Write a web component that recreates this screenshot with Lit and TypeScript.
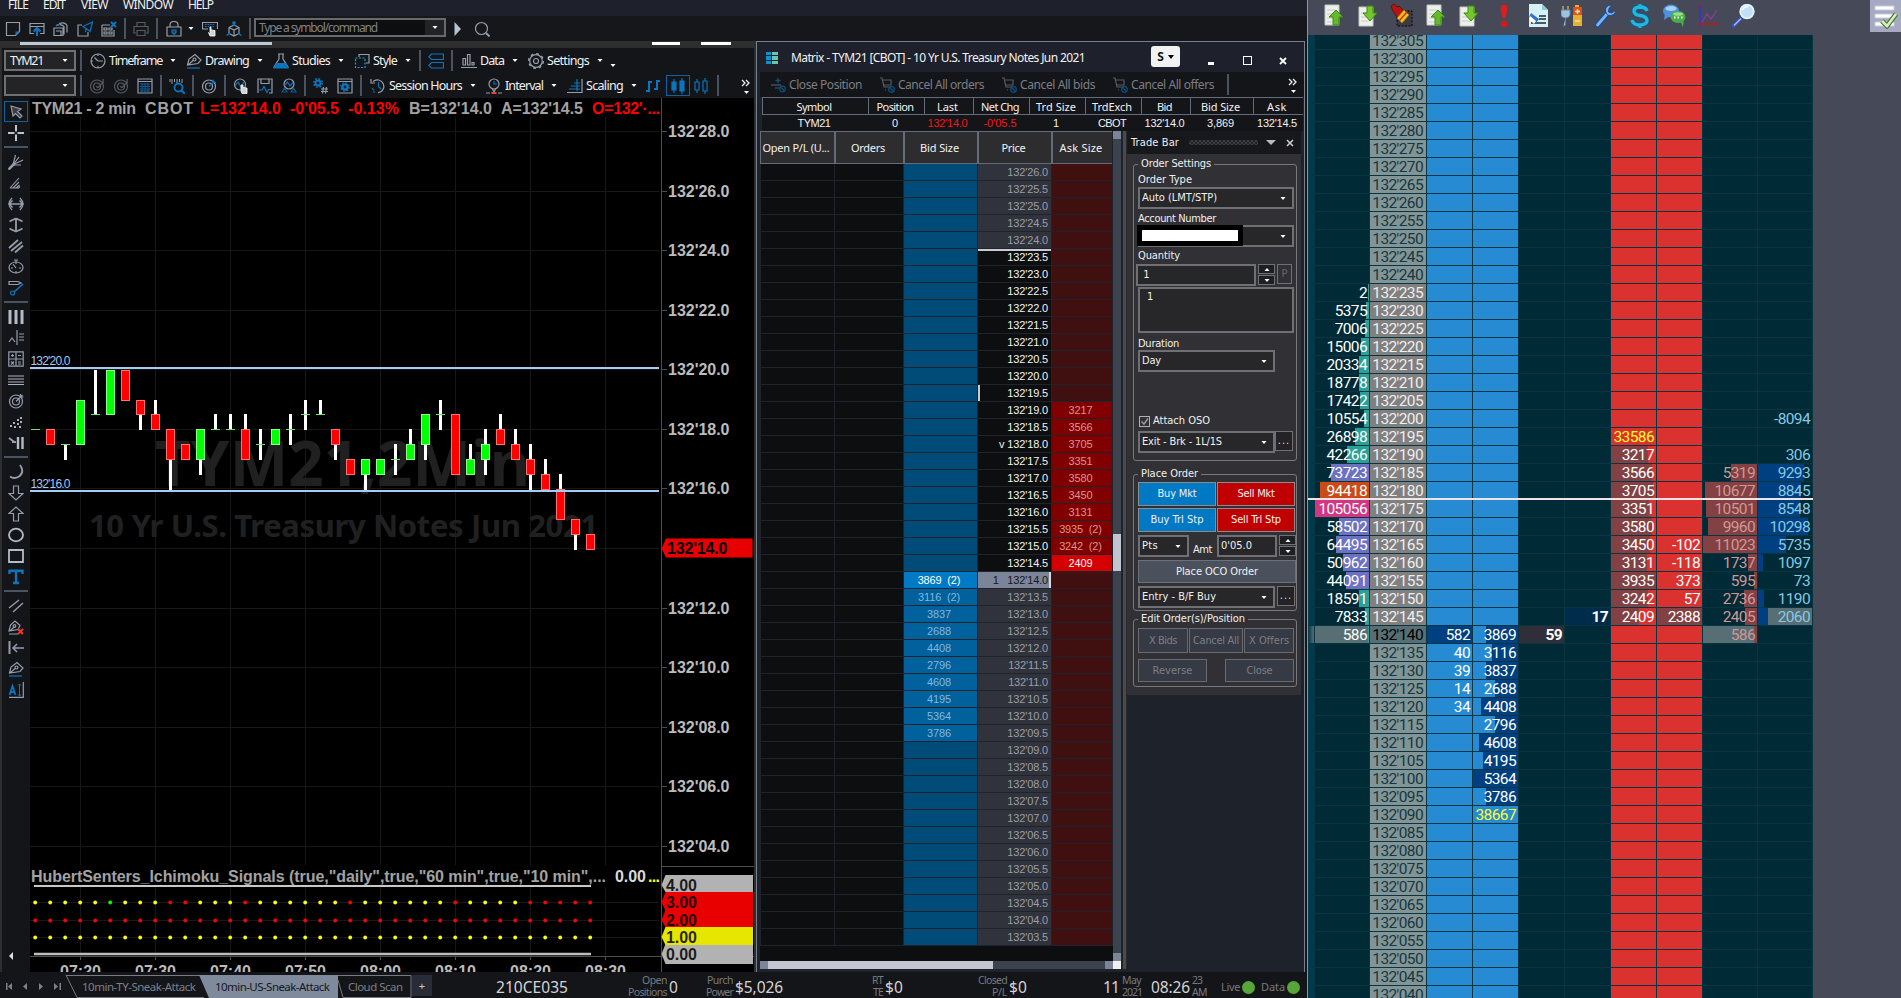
import { LitElement, html, svg, css, nothing } from "lit";
import { customElement, property } from "lit/decorators.js";
import { classMap } from "lit/directives/class-map.js";

/* Text tracked so that it fills a given width. */
@customElement("fit-text")
class FitText extends LitElement {
  @property({ type: Number }) w = 0;
  @property() t = "";
  static styles = css`
    :host { display: inline-block; white-space: pre; flex: none; }
    .s { display: inline-block; white-space: pre; }
  `;
  updated() {
    this.style.width = this.w + "px";
    const s = this.renderRoot.querySelector(".s") as HTMLElement;
    s.style.letterSpacing = "0";
    const nat = s.getBoundingClientRect().width;
    s.style.letterSpacing = (this.w - nat) / Math.max(1, this.t.length) + "px";
  }
  render() { return html`<span class="s">${this.t}</span>`; }
}

const G = "#959daa", B = "#0b76bd", D = "#555a61";
const ico: Record<string, any> = {
  note: svg`<path d="M1.500 1.500h13v9l-4 4h-9z"/><path d="M14.500 10.500h-4v4z" fill=${B} stroke="none"/>`,
  upload: svg`<path d="M5 12.500H1V2.500h14v10h-4M1 5.500h14"/><path d="M8 15V7M4.500 10.500L8 7l3.500 3.500" stroke=${B} stroke-width="2"/>`,
  print3: svg`<path d="M1 7h9v7.500H1zM3 10h5v4M3 4.500q5-2 8 1v8M6 2.500q6-2 8 2v7"/><path d="M3 5l4-2" stroke=${B}/>`,
  send: svg`<path d="M5 4H1v11h10v-4"/><path d="M15.500 1L6 5.500 9 7.500l4 3zM9 7.500L8.500 11" stroke=${B}/>`,
  gridx: svg`<path d="M1 4h8M1 4v11h12V9M3 7h3v2H3zM8 7h3v2H8zM3 11h3v2H3zM8 11h3v2H8z"/><path d="M10 1l5 5M15 1l-5 5" stroke=${B} stroke-width="2"/>`,
  print: svg`<g stroke=${D}><path d="M4 5V1.500h8V5M3 12H1V5.500h14V12h-2M4 9.500h8v5H4z"/></g>`,
  lock: svg`<path d="M1 6h14v9H1zM4 6V4q0-3.500 4-3.500T12 4v2"/><path d="M6 9h4v2.500L8 13.500 6 11.500z" stroke=${B} fill="#0b4068"/>`,
  keyhand: svg`<path d="M6 8H.5V1.500h15V8"/><path d="M3 3.500h10M3 5.500h10" stroke=${B} stroke-dasharray="1.500 1"/><path d="M8 6v7l-1.500-1.500L8 15h5V9.500l-4-.5V6z" fill="#cfd2d6" stroke="#fff" stroke-width=".8"/>`,
  cube: svg`<path d="M8 4l5 2.500v6L8 15l-5-2.500v-6zM3 6.500L8 9l5-2.500M8 9v6"/><path d="M8 .5V5M8 .5L6.500 2.500M8 .5l1.500 2M.5 14.500L4 12M15.500 14.500L12 12" stroke=${B} stroke-width="1.500"/>`,
  play: svg`<path d="M5.500 1v14l6.500-7z" fill="#b7c3d2" stroke="none"/>`,
  search: svg`<circle cx="7.500" cy="7.500" r="6"/><path d="M12 12l3.500 3.500" stroke-width="2"/>`,
  clock: svg`<circle cx="8" cy="8" r="7"/><path d="M8 8h5M8 8L4.500 4.500M8 1v2M8 13v2M1 8h2"/>`,
  pen: svg`<path d="M1.500 12L3 6l6-4.500L15 7l-3 3.500zM2 12l5-4.500"/><circle cx="8.500" cy="6.500" r="1.500"/><path d="M1 15h13" stroke=${B}/>`,
  flask: svg`<path d="M5 1h6M6 1v5M10 1v5L15 14H1L6 6"/><path d="M3.500 10.500h9L15 15H1z" fill=${B} stroke=${B}/>`,
  style: svg`<path d="M5 4V1.500h10V10h-3"/><path d="M1.500 5h9.500v9.500H1.500z" stroke="#1a9be0" stroke-dasharray="2 1.500"/>`,
  blocks: svg`<g stroke=${B}><path d="M3.500 1h12v5.500h-12L.8 3.800zM3.500 9.500h12V15h-12L.8 12.300z"/></g>`,
  data: svg`<path d="M0 14.500h16M2 12V5.500h2.500V12zM6.500 12V1.500H9V12zM11 12V9.500h2V12z"/>`,
  gear: svg`<circle cx="8" cy="8" r="6.300"/><circle cx="8" cy="8" r="2.500"/><circle cx="8" cy="8" r="7.300" stroke-dasharray="2.800 2.930" stroke-width="1.500"/>`,
  target: svg`<circle cx="8" cy="8.500" r="6.500"/><circle cx="8" cy="8.500" r="3.500"/><path d="M8 8.500L13.500 3M12 1.500v3h3" stroke=${B}/>`,
  targetG: svg`<circle cx="8" cy="8.500" r="6.500"/><circle cx="8" cy="8.500" r="3.500"/><path d="M8 8.500L14.500 2M12.500 1v3h3"/>`,
  targetD: svg`<g stroke=${D}><circle cx="8" cy="8.500" r="6.500"/><circle cx="8" cy="8.500" r="3.500"/><path d="M7 8.500l2 1 6-6M14 1v3"/></g>`,
  cal: svg`<path d="M3 6h10M3 8.500h10M3 11h10M3 13h10M5 5v9M8 5v9M11 5v9" stroke="#0b5a92" stroke-width="1"/><path d="M1 1h14v14H1zM1 3.500h14"/>`,
  lens: svg`<path d="M1 1v3M3 1v5M5.500 1v3M8 1v4M10.500 1v3M13 1v4" stroke-width="1"/><circle cx="9.500" cy="9.500" r="4" stroke=${B} stroke-width="1.800"/><path d="M12.500 12.500L16 16" stroke=${B} stroke-width="2"/>`,
  wavehand: svg`<circle cx="7" cy="6.500" r="5.500"/><path d="M2 8l3-4 3 5 3-5" stroke=${B}/><path d="M8 7v6l1 2.500h5V10l-4-.5V7z" fill="#cfd2d6" stroke="#fff" stroke-width=".8"/>`,
  save: svg`<path d="M1 15V1h14v14h-3M4 1v4.500h8V1"/><path d="M2 12h3l2-3.500 3 6 1.500-3H15" stroke=${B}/>`,
  people: svg`<circle cx="8" cy="6" r="5"/><path d="M4 7l2.500-3L9 8l3-3.500" stroke=${B}/><path d="M1 14l2.500-4L6 14zM10 14l2.500-4L15 14z" stroke="#0b5a90"/>`,
  gearhash: svg`<circle cx="5" cy="5" r="2.500" stroke=${B} stroke-width="2"/><circle cx="5" cy="5" r="4.300" stroke=${B} stroke-dasharray="1.700 1.680" stroke-width="1.500"/><path d="M8 11h7M8 13.500h7M10.500 9L9.500 15.500M13.500 9l-1 6.500"/>`,
  calgear: svg`<path d="M1 1h14v14H1zM1 3.500h14"/><circle cx="8" cy="9" r="2.600" stroke=${B} stroke-width="2.400"/><circle cx="8" cy="9" r="4.200" stroke=${B} stroke-dasharray="1.600 1.700"/>`,
  history: svg`<path d="M3 3.500A6.500 6.500 0 1 1 8 14.800M1 1v4h4"/><path d="M8.500 4v4.500L11 11M2 10l2 2.500M3 14h2" stroke=${B}/>`,
  interval: svg`<circle cx="8" cy="6" r="5"/><path d="M6 10l2 4 2-4"/><path d="M8 3v3h3" stroke=${B}/><path d="M0 15h4M12 15h4"/><path d="M5.500 15h5" stroke="#e8432e" stroke-width="2"/>`,
  scaling: svg`<path d="M15 1v14M0 14.500h15"/><path d="M2 11h11M4 8h9M7 5h6M10 1v12" stroke=${B}/>`,
  ohlc: svg`<g stroke=${B} stroke-width="2"><path d="M4 3v11M1 13h3M4 4h3M12 2v10M9 11h3M12 3h3"/></g>`,
  candle: svg`<path d="M2 4h4v8H2zM10 3h4v10h-4z" fill=${B} stroke=${B}/><path d="M4 1v14M12 0v16" stroke=${B}/>`,
  candleO: svg`<g stroke=${B}><path d="M2 4h4v8H2zM10 3h4v10h-4zM4 1v3M4 12v3M12 0v3M12 13v3"/></g>`,
  arrow: svg`<path d="M3 2l2 10 2.500-2.500L12 14l2-2-4.500-4.500L13 5z" fill="#3a3e45"/>`,
  cross: svg`<path d="M8 0v6.500M8 9.500V16M0 8h6.500M9.500 8H16" stroke="#bcc4cf" stroke-width="2"/>`,
  fork: svg`<path d="M.5 15.500L6 10" stroke-width="2.600"/><path d="M5 11L7.500 1M5 11L11 3M5.500 10.500L15 6M5 11h8" stroke-width="1.200"/>`,
  fan: svg`<path d="M2 13L11 3M5 13l6-6M8 13l3.500-3M10.500 13l1.500-1.500M2 13h9" stroke-width="1.100"/>`,
  harr: svg`<path d="M1 8h14M4.500 4.500L1 8l3.500 3.500M11.500 4.500L15 8l-3.500 3.500" stroke-width="1.500"/><path d="M4 2Q1 5 1 8t3 6M12 2q3 3 3 6t-3 6" stroke-width="1.200"/>`,
  varr: svg`<path d="M8 2v12M1.500 4.500Q4 3 8 1.500q4 1.500 6.500 3M1.500 11.500Q4 13 8 14.500q4-1.500 6.500-3" stroke-width="1.800"/>`,
  lines3: svg`<path d="M1 10L10 2M3 13L14 4M7 14.500l8-7" stroke-width="1.800"/>`,
  cycle: svg`<ellipse cx="8" cy="8.500" rx="7" ry="5.500"/><path d="M6 1h4M8 1v4M5 5l3 4M3 9h2M11 9h2M8 12v2"/>`,
  pencil: svg`<path d="M1 1.500h9l3 1.500-3 1.500H1z"/><path d="M15 4L6 12" stroke=${B} stroke-width="1.600"/><circle cx="4.500" cy="13" r="2" stroke=${B}/>`,
  bars3: svg`<path d="M2 1v14M8 1v14M14 1v14" stroke="#b4bcc8" stroke-width="3"/>`,
  profile: svg`<path d="M9 0v15M11 4h5M11 7h5M11 10h5M1 12l3-4 3 4"/>`,
  calc: svg`<path d="M.8 .8h14.400v14.400H.8zM8 1v14M1 8h14M4.500 3v3M3 4.500h3M10 4.500h3M3 10.500l3 3M6 10.500l-3 3M10 11h3M10 13h3"/>`,
  hlines: svg`<path d="M0 4h16M0 7h16M0 10h16M0 12.500h16" stroke="#a9b1bd"/>`,
  dots: svg`<g fill="#a9b1bd" stroke="none"><rect x="2" y="11" width="2" height="2"/><rect x="5" y="8" width="2" height="2"/><rect x="6" y="12" width="2" height="2"/><rect x="9" y="5" width="2" height="2"/><rect x="9" y="9" width="2" height="2"/><rect x="12" y="3" width="2" height="2"/><rect x="12" y="7" width="2" height="2"/><rect x="11" y="12" width="2" height="2"/></g>`,
  stop: svg`<path d="M1 3l6 4.500M4 7h4" stroke-width="2"/><path d="M10 2v12M14.500 2v12" stroke="#b4bcc8" stroke-width="2.400"/>`,
  arc: svg`<path d="M12 1q5 7-1 11.500-5 3-9 0" stroke-width="1.800"/>`,
  down: svg`<path d="M5.500 1h5v7.500H15L8 15 1 8.500h4.500z"/>`,
  up: svg`<path d="M5.500 15h5V7.500H15L8 1 1 7.500h4.500z"/>`,
  oval: svg`<ellipse cx="8" cy="8" rx="7" ry="6.300" stroke="#b4bcc8" stroke-width="1.800"/>`,
  rect: svg`<path d="M1 2h14v12H1z" stroke="#b4bcc8" stroke-width="1.800"/>`,
  tee: svg`<path d="M1.500 5V1.800h13V5M8 2v12M5 14h6" stroke=${B} stroke-width="2.400"/>`,
  par: svg`<path d="M1 10L11 2M5 14L15 5" stroke-width="1.400"/>`,
  penx: svg`<path d="M1 12l1.500-6L7 2l5 4.500-2 4zM2 12l4-4M1 15h9"/><circle cx="6.500" cy="7" r="1.300"/><path d="M10 10l5 5M15 10l-5 5" stroke="#f0392b" stroke-width="2"/>`,
  back: svg`<path d="M1.500 1v13" stroke-width="2"/><path d="M5 8h11M9 4L5 8l4 4" stroke-width="1.500"/>`,
  atext: svg`<path d="M1.500 13L4.500 4l3 9M2.500 10h4" stroke=${B} stroke-width="1.800"/><path d="M11.500 2v12M10 3.500L11.500 2 13 3.500M10 12.500l1.500 1.500 1.500-1.500" stroke=${B} stroke-width="1"/><path d="M15.300 0v15.300H1"/>`,
  closepos: svg`<path d="M8 1v5M5.500 3.500h5M5 11h4" stroke="#0b4e7c" stroke-width="1.500"/><path d="M1 8h10" stroke=${D}/><circle cx="12.500" cy="12" r="2.800" stroke="#0b4e7c"/><path d="M10.500 10l4 4" stroke="#0b4e7c"/>`,
  cart: svg`<path d="M1 1h2l2 9h7M4 3h8v5H5M6 13h1" stroke=${D}/><circle cx="12.500" cy="12.500" r="2.800" stroke="#0b4e7c"/><path d="M10.500 10.500l4 4" stroke="#0b4e7c"/>`,
};
const icon = (n: string) => html`<svg width="16" height="16" viewBox="0 0 16 16" fill="none" stroke=${G} stroke-width="1.200">${ico[n]}</svg>`;
const caret = html`<svg width="8" height="5" viewBox="0 0 8 5"><path d="M1.500 1h5L4 4z" fill="#fff"/></svg>`;
const chevron = html`<svg width="10" height="18" viewBox="0 0 10 18"><path d="M1 3l3 3-3 3M5 3l3 3-3 3" fill="none" stroke="#eee" stroke-width="1.300"/><path d="M3 14h5l-2.500 3z" fill="#fff"/></svg>`;
const fit = (t: string, w: number) => html`<fit-text .t=${t} .w=${w}></fit-text>`;

type Item = [number, number, any]; // start, width, content
/* Turns start positions into a row of spacers and boxes. */
const run = (from: number, items: Item[]) => {
  let x = from;
  return items.map(([s, w, c]) => {
    const gap = s - x;
    x = s + w;
    return html`<div class="slot" style="width:${w}px;margin-left:${gap}px">${c}</div>`;
  });
};
const sep = html`<i class="sep"></i>`;
const slotCss = css`
  .slot { display: flex; align-items: center; justify-content: center; flex: none; height: 100%; }
  .sep { width: 2px; height: 21px; background: #4b5360; }
  svg { display: block; flex: none; }
`;

/* ---------- price chart ---------- */
// [color, open/close high, open/close low, wick high, wick low] in half ticks above 132'14.0
const candles: [string, number, number, number, number][] = [
  ["d", 8, 8, 8, 8], ["r", 8, 7, 8, 7], ["d", 7, 7, 7, 6], ["g", 10, 7, 10, 7], ["d", 9, 9, 12, 9], ["g", 12, 9, 12, 9],
  ["r", 12, 10, 12, 10], ["r", 10, 9, 10, 8], ["r", 9, 8, 10, 8], ["r", 8, 6, 8, 4], ["r", 7, 6, 7, 6], ["g", 8, 6, 8, 5],
  ["d", 8, 8, 9, 8], ["d", 8, 8, 9, 8], ["r", 8, 6, 9, 6], ["d", 7, 7, 8, 6], ["g", 8, 7, 8, 7], ["d", 8, 8, 9, 7],
  ["d", 9, 9, 10, 8], ["d", 9, 9, 10, 9], ["r", 8, 7, 8, 6], ["r", 6, 5, 6, 5], ["g", 6, 5, 6, 4], ["g", 6, 5, 6, 5],
  ["d", 6, 6, 7, 5], ["g", 7, 6, 8, 6], ["g", 9, 7, 9, 6], ["d", 9, 9, 10, 8], ["r", 9, 5, 9, 5], ["g", 6, 5, 7, 5],
  ["g", 7, 6, 8, 5], ["r", 8, 7, 9, 7], ["r", 7, 6, 8, 6], ["r", 6, 5, 7, 4], ["r", 5, 4, 6, 4], ["r", 4, 2, 5, 2],
  ["r", 2, 1, 2, 0], ["r", 1, 0, 1, 0],
];
const lvl = (n: number) => Math.round(548.5 - n * 14.9) + 0.5;

@customElement("price-chart")
class PriceChart extends LitElement {
  static styles = css`
    :host { display: block; width: 724px; height: 874px; background: #000; }
    svg { display: block; }
    .b { font: bold 16px "Liberation Sans", Arial, sans-serif; }
    .l { font: 12px "Liberation Sans", Arial, sans-serif; fill: #a6c8f4; }
    .w { font-family: "Noto Sans", "Open Sans", sans-serif; font-weight: 700; fill: #202020; }
  `;
  render() {
    const xs = [0, 1, 2, 3, 4, 5, 6, 7].map((i) => 80.5 + i * 75);
    const prices = ["28", "26", "24", "22", "20", "18", "16", "", "12", "10", "08", "06", "04"];
    const py = (i: number) => Math.round(131 + i * 59.58) + 0.5;
    const t = (x: number, w: number, s: string, f: string, y = 114) =>
      svg`<text class="b" x=${x} y=${y} textLength=${w} fill=${f} xml:space="preserve">${s}</text>`;
    const red = new Set([9, 10, 14, 21, 28, 33, 34, 35, 36, 37]);
    const tag = (y: number, h: number, c: string, s: string) => svg`
      <path d="M661.500 ${y + 10}L665.500 ${y}H753V${y + h}H665.500z" fill=${c}/>
      <text class="b" x="666" y=${y + 16} fill="#000" fill-opacity=".85" textLength="31">${s}</text>`;
    return html`<svg width="724" height="874" viewBox="30 98 724 874">
      <g stroke="#171717">
        ${xs.map((x) => svg`<path d="M${x} 117V865M${x} 887V956"/>`)}
        ${prices.map((_, i) => svg`<path d="M30 ${py(i)}H659"/>`)}
        ${[902.5, 920.5, 937.5].map((y) => svg`<path d="M30 ${y}H659"/>`)}
      </g>
      <text class="w" x="155" y="486" font-size="62" textLength="375">TYM21,2Min</text>
      <text class="w" x="89" y="537" font-size="31" textLength="509">10 Yr U.S. Treasury Notes Jun 2021</text>
      <g stroke="#4d4d4d">
        <path d="M661.500 98V972M661 866.500H754M30 956.500H754"/>
        ${prices.map((_, i) => svg`<path d="M661 ${py(i)}h6"/>`)}
        ${xs.map((x) => svg`<path d="M${x} 956v4"/>`)}
      </g>
      ${prices.map((p, i) => p ? t(668, 61.5, `132'${p}.0`, "#bcbcbc", py(i) + 5.5) : nothing)}
      ${candles.map(([c, a, b, h, l], i) => {
        const x = 35.5 + i * 15;
        const wick = h > a || l < b ? svg`<path d="M${x} ${lvl(h) - 0.5}V${lvl(l) + 0.5}" stroke="#fff" stroke-width="3"/>` : nothing;
        return c === "d"
          ? svg`${wick}<path d="M${x - 4.5} ${lvl(a)}h9" stroke="#6be86b"/>`
          : svg`${wick}<rect x=${x - 4} y=${lvl(a)} width="8" height=${lvl(b) - lvl(a)} fill=${c === "r" ? "#f00" : "#0f0"} stroke=${c === "r" ? "#ff7070" : "#8cff8c"}/>`;
      })}
      <path d="M30 368H659M30 491H659" stroke="#a6ccf6" stroke-width="2"/>
      <text class="l" x="30.500" y="365" textLength="40">132'20.0</text>
      <text class="l" x="30.500" y="488" textLength="40">132'16.0</text>
      <path d="M661.500 548.500L666 538.500H752.500V557.500H666z" fill="#e80000"/>
      ${t(667, 60.5, "132'14.0", "#000", 554)}
      ${t(32, 104, "TYM21 - 2 min", "#a2a2a2")}${t(145, 48, "CBOT", "#a2a2a2")}
      ${t(200, 81, "L=132'14.0", "#f00")}${t(290, 49, "-0'05.5", "#f00")}${t(348, 51, "-0.13%", "#f00")}
      ${t(409, 83, "B=132'14.0", "#a2a2a2")}${t(501, 82, "A=132'14.5", "#a2a2a2")}${t(592, 68, "O=132'·...", "#f00")}
      ${t(31, 575, `HubertSenters_Ichimoku_Signals (true,"daily",true,"60 min",true,"10 min",...`, "#a2a2a2", 881.5)}
      ${t(615, 31, "0.00", "#d8d8d8", 881.5)}${t(648, 12, "...", "#ffff00", 881.5)}
      <path d="M34 886H591" stroke="#c8c8c8" stroke-width="2"/>
      <path d="M34 954H591" stroke="#bdbdbd" stroke-width="2.500"/>
      ${candles.map((_, i) => {
        const x = 35.2 + i * 15;
        return svg`<circle cx=${x} cy="902.500" r="1.900" fill=${i === 5 ? "#0f0" : red.has(i) ? "#f00" : "#ff0"}/>
          <circle cx=${x} cy="920.500" r="1.900" fill="#f00"/><circle cx=${x} cy="937.500" r="1.900" fill="#ff0"/>`;
      })}
      ${xs.map((x, i) => t(x - 20.5, 41, ["07:20", "07:30", "07:40", "07:50", "08:00", "08:10", "08:20", "08:30"][i], "#bcbcbc", 977))}
      ${tag(944, 20, "#b2b2b2", "0.00")}${tag(927, 18, "#e6e600", "1.00")}${tag(910, 17, "#e80000", "2.00")}
      ${tag(892, 19, "#e80000", "3.00")}${tag(875, 17, "#b2b2b2", "4.00")}
    </svg>`;
  }
}

@customElement("chart-window")
class ChartWindow extends LitElement {
  static styles = [slotCss, css`
    :host { display: flex; flex-direction: column; width: 754px; height: 931px; background: #2e2e2e; font: 12.500px "Noto Sans", "Open Sans", sans-serif; color: #f0f0f0; }
    .strip { display: flex; height: 7px; align-items: flex-start; }
    .bar { height: 3px; width: 100%; margin-top: 1px; }
    .lt { background: #bccad8; } .wh { background: #fff; }
    .body { display: flex; flex-direction: column; margin-left: 2px; background: #141519; }
    .tb { display: flex; height: 25px; }
    .strip .slot { align-items: flex-start; }
    .combo { box-sizing: border-box; width: 72px; height: 21px; border: 2px solid #6f7074; background: #242426; display: flex; align-items: center; justify-content: space-between; padding: 0 5px 0 4px; }
    .sel { box-sizing: border-box; width: 24px; height: 21px; border: 1px solid #0f62a0; display: flex; align-items: center; justify-content: center; }
    .main { display: flex; }
    .tools { width: 28px; display: flex; flex-direction: column; align-items: center; padding-top: 3px; box-sizing: border-box; }
    .tool { height: 21px; display: flex; align-items: center; justify-content: center; width: 24px; flex: none; }
    .on { outline: 1px solid #0f62a0; outline-offset: -1px; }
    .hr { width: 24px; height: 2px; background: #4b5360; margin: 3px 0; flex: none; }
    .low { margin-top: 9px; } .more { margin: 252px 11px 0 0; }
  `];
  render() {
    const c = caret;
    const r1: Item[] = [
      [4, 72, html`<div class="combo">${fit("TYM21", 33)}${c}</div>`], [79, 4, sep],
      [90, 16, icon("clock")], [109, 53, fit("Timeframe", 53)], [169, 8, c],
      [186, 16, icon("pen")], [205, 44, fit("Drawing", 44)], [256, 8, c],
      [273, 16, icon("flask")], [292, 38, fit("Studies", 38)], [337, 8, c],
      [354, 16, icon("style")], [373, 24, fit("Style", 24)], [404, 8, c], [418, 4, sep],
      [428, 16, icon("blocks")], [450, 4, sep],
      [461, 16, icon("data")], [480, 24, fit("Data", 24)], [511, 8, c],
      [528, 16, icon("gear")], [547, 42, fit("Settings", 42)], [596, 8, c], [609, 8, html`<div class="low">${c}</div>`],
    ];
    const r2: Item[] = [
      [4, 72, html`<div class="combo"><span></span>${c}</div>`], [79, 4, sep],
      [89, 16, icon("targetD")], [113, 16, icon("targetD")], [137, 16, icon("cal")], [159, 4, sep],
      [169, 16, icon("lens")], [191, 4, sep], [201, 16, icon("target")], [223, 4, sep],
      [233, 16, icon("wavehand")], [257, 16, icon("save")], [281, 16, icon("people")], [303, 4, sep],
      [313, 16, icon("gearhash")], [337, 16, icon("calgear")], [359, 4, sep],
      [370, 16, icon("history")], [389, 73, fit("Session Hours", 73)], [469, 8, c],
      [486, 16, icon("interval")], [505, 38, fit("Interval", 38)], [550, 8, c],
      [567, 16, icon("scaling")], [586, 37, fit("Scaling", 37)], [630, 8, c],
      [645, 16, icon("ohlc")], [666, 24, html`<div class="sel">${icon("candle")}</div>`], [693, 16, icon("candleO")],
      [716, 4, sep], [741, 10, chevron],
    ];
    const groups = [["arrow", "cross"], ["fork", "fan", "harr", "varr", "lines3", "cycle", "pencil"],
      ["bars3", "profile", "calc", "hlines", "targetG", "dots", "stop"], ["arc", "down", "up", "oval", "rect", "tee"],
      ["par", "penx", "back", "pen", "atext"]];
    return html`
      <div class="strip">${run(0, [[20, 252, html`<i class="bar lt"></i>`], [652, 28, html`<i class="bar wh"></i>`], [701, 30, html`<i class="bar wh"></i>`]])}</div>
      <div class="body">
        <div class="tb">${run(2, r1)}</div>
        <div class="tb">${run(2, r2)}</div>
        <div class="main">
          <div class="tools">
            ${groups.map((g, i) => html`${i ? html`<i class="hr"></i>` : nothing}${g.map((n) => html`<div class=${classMap({ tool: true, on: n === "arrow" })}>${icon(n)}</div>`)}`)}
            <div class="more"><svg width="6" height="8"><path d="M5 0v8L1 4z" fill="#ddd"/></svg></div>
          </div>
          <price-chart></price-chart>
        </div>
      </div>`;
  }
}

/* ---------- matrix order window ---------- */
const bids: Record<number, string> = { 24: "3869  (2)", 25: "3116  (2)", 26: "3837", 27: "2688", 28: "4408", 29: "2796", 30: "4608", 31: "4195", 32: "5364", 33: "3786" };
const asks: Record<number, string> = { 14: "3217", 15: "3566", 16: "3705", 17: "3351", 18: "3580", 19: "3450", 20: "3131", 21: "3935  (2)", 22: "3242  (2)", 23: "2409" };

@customElement("trade-bar")
class TradeBar extends LitElement {
  static styles = [slotCss, css`
    :host { display: block; width: 174px; font: 11px/14px "DejaVu Sans Condensed", "DejaVu Sans", sans-serif; color: #f0f0f0; }
    .head { display: flex; height: 23px; background: #17181c; }
    .grip { width: 69px; height: 5px; background: repeating-conic-gradient(#3c3d42 0 25%, #222327 0 50%) 0 0 / 4px 4px; }
    .panel { background: #313035; height: 541px; padding: 3px 4px 0 6px; box-sizing: border-box; }
    fieldset { margin: 0; border: 1px solid #77787c; border-radius: 3px; padding: 0 0 0 4px; box-sizing: border-box; width: 164px; min-width: 0; }
    legend { padding: 0 3px; margin-left: 0; height: 14px; }
    .g1 { height: 304px; } .g2 { height: 144px; margin-top: 6px; } .g3 { height: 75px; margin-top: 1px; }
    .row { display: flex; }
    .lab { height: 14px; }
    .f { box-sizing: border-box; border: 2px solid #6f7074; background: #27272a; height: 22px; display: flex; align-items: center; justify-content: space-between; padding: 0 5px 0 2px; flex: none; }
    .w157 { width: 156px; } .w137 { width: 137px; } .w121 { width: 120px; margin-left: -2px; } .w51 { width: 51px; } .w60 { width: 60px; margin-left: 5px; }
    .acct { position: relative; }
    .mask { position: absolute; left: -5px; top: -11px; width: 96px; height: 11px; border: 5px solid #000; background: #fff; }
    .area { height: 46px; align-items: flex-start; padding: 1px 0 0 7px; }
    .sp { width: 17px; height: 21px; display: flex; flex-direction: column; gap: 1px; margin-left: 2px; flex: none; }
    .sp i { flex: 1; border: 1px solid #6f7074; background: #1e1f22; display: flex; align-items: center; justify-content: center; }
    .flip { transform: rotate(180deg); }
    .p, .dots { box-sizing: border-box; border: 1px solid #6f7074; width: 15px; height: 20px; margin-left: 2px; display: flex; align-items: center; justify-content: center; color: #66676b; flex: none; }
    .dots { width: 18px; margin-left: 0; background: #232326; color: #ddd; height: 20px; letter-spacing: 1px; }
    .btn { box-sizing: border-box; height: 24px; border: 1px solid #8b8c90; display: flex; align-items: center; justify-content: center; flex: none; }
    .buy { background: #0079c4; width: 78px; } .sell { background: #c00000; width: 78px; margin-left: 1px; }
    .oco { background: #4a505c; width: 158px; height: 23px; border-color: #6b707a; }
    .dis { background: #353a44; color: #7b7f86; border-color: #6a6b70; height: 25px; }
    .cb { width: 9px; height: 9px; border: 1px solid #b0b0b0; margin-right: 3px; }
    .n1 { margin-top: -1px; } .m1 { margin-top: 1px; } .m2 { margin-top: 2px; } .m3 { margin-top: 3px; } .m4 { margin-top: 4px; }
    .chk { margin: 42px 0 0 1px; align-items: center; }
    .amt { margin: 8px 0 0 4px; }
    .d2 { margin-left: 2px; }
    .e1 { display: grid; grid-template-columns: 50px 54px 50px; gap: 1px; margin-top: 2px; }
    .e2 { justify-content: space-between; width: 156px; margin-top: 6px; }
    .e2 .btn { width: 69px; height: 23px; }
  `];
  render() {
    const spin = html`<span class="sp"><i><span class="flip">${caret}</span></i><i>${caret}</i></span>`;
    return html`
      <div class="head">${run(0, [[4, 48, fit("Trade Bar", 48)], [62, 69, html`<i class="grip"></i>`],
        [139, 10, html`<svg width="10" height="6"><path d="M0 0h10L5 5z" fill="#bbb"/></svg>`],
        [159, 8, html`<svg width="8" height="8"><path d="M1 1l6 6M7 1L1 7" stroke="#ccc" stroke-width="1.600"/></svg>`]])}</div>
      <div class="panel">
        <fieldset class="g1"><legend>${fit("Order Settings", 70)}</legend>
          <div class="lab m2">${fit("Order Type", 54)}</div>
          <div class="f w157">${fit("Auto (LMT/STP)", 75)}${caret}</div>
          <div class="lab m3">${fit("Account Number", 78)}</div>
          <div class="f w157 n1"><span class="acct"><i class="mask"></i></span>${caret}</div>
          <div class="lab m2">${fit("Quantity", 42)}</div>
          <div class="row m1"><div class="f w121">&nbsp;1</div>${spin}<div class="p">P</div></div>
          <div class="f area w157 m1">1</div>
          <div class="lab m4">${fit("Duration", 41)}</div>
          <div class="f w137 n1">${fit("Day", 19)}${caret}</div>
          <div class="row chk"><i class="cb"><svg width="9" height="9"><path d="M1.500 4.500L4 7l4-5.500" stroke="#999" fill="none" stroke-width="1.500"/></svg></i>${fit("Attach OSO", 57)}</div>
          <div class="row m3"><div class="f w137">${fit("Exit - Brk - 1L/1S", 80)}${caret}</div><div class="dots">...</div></div>
        </fieldset>
        <fieldset class="g2"><legend>${fit("Place Order", 57)}</legend>
          <div class="row m1"><div class="btn buy">${fit("Buy Mkt", 39)}</div><div class="btn sell">${fit("Sell Mkt", 37)}</div></div>
          <div class="row m2"><div class="btn buy">${fit("Buy Trl Stp", 53)}</div><div class="btn sell">${fit("Sell Trl Stp", 50)}</div></div>
          <div class="row m3"><div class="f w51">${fit("Pts", 16)}${caret}</div><span class="amt">${fit("Amt", 19)}</span><div class="f w60">${fit("0'05.0", 31)}</div>${spin}</div>
          <div class="btn oco m3">${fit("Place OCO Order", 82)}</div>
          <div class="row m3"><div class="f w137">${fit("Entry - B/F Buy", 74)}${caret}</div><div class="dots d2">...</div></div>
        </fieldset>
        <fieldset class="g3"><legend>${fit("Edit Order(s)/Position", 104)}</legend>
          <div class="e1"><div class="btn dis">${fit("X Bids", 28)}</div><div class="btn dis">${fit("Cancel All", 46)}</div><div class="btn dis">${fit("X Offers", 40)}</div></div>
          <div class="row e2"><div class="btn dis">${fit("Reverse", 40)}</div><div class="btn dis">${fit("Close", 26)}</div></div>
        </fieldset>
      </div>`;
  }
}

@customElement("matrix-window")
class MatrixWindow extends LitElement {
  static styles = [slotCss, css`
    :host { display: flex; flex-direction: column; box-sizing: border-box; width: 549px; height: 931px; margin-left: 2px; border: solid #76808f; border-width: 1px 1px 0; background: #1e222b; color: #f2f2f2; font: 12px "Noto Sans", "Open Sans", sans-serif; }
    .title { display: flex; height: 30px; background: #1e212b; padding-top: 1px; box-sizing: border-box; }
    .tb { display: flex; height: 25px; background: #141519; margin-left: 3px; color: #7b7e84; }
    .s { width: 29px; height: 21px; border-radius: 3px; background: #f2f2f2; color: #111; display: flex; align-items: center; justify-content: center; gap: 4px; font-weight: 700; margin-bottom: 2px; }
    .min { width: 6px; height: 3px; background: #fff; margin-top: 12px; }
    .max { width: 7px; height: 7px; border: 1.500px solid #fff; margin-top: 5px; }
    .x { margin-top: 6px; }
    .tbl { display: grid; grid-template-columns: 106px 56px 49px 56px 56px 56px 49px 63px 50px; margin: 0 0 0 5px; width: 541px; background: #141519; font-family: "Noto Sans"; font-size: 11px; }
    .th { box-sizing: border-box; height: 18px; border: 1px solid #646b7a; border-right-width: 0; display: flex; align-items: center; justify-content: center; padding-right: 3px; }
    .td { height: 16px; display: flex; align-items: center; justify-content: center; font: 11px "Liberation Sans", sans-serif; padding-right: 2px; }
    .td.neg { color: #f21818; }
    .work { display: flex; margin-left: 3px; }
    .lad { width: 353px; }
    .r, .h { display: grid; grid-template-columns: 74px 69px 74px 74px 61px; padding-left: 1px; }
    .h { margin-left: -1px; }
    .h span { box-sizing: border-box; height: 33px; border: 1px solid #646b7a; border-width: 1px 0 1px 2px; background: #2d2d30; display: flex; align-items: center; justify-content: center; font-size: 11px; padding-right: 3px; }
    .h span:first-child { border-left-width: 1px; }
    .r { height: 17px; font: 11px/17px "Liberation Sans", sans-serif; letter-spacing: -0.150px; background: #20232c; }
    .c { margin: 0 1px 1px 0; height: 16px; background: #0d0e10; text-align: center; white-space: pre; box-sizing: border-box; padding-right: 3px; }
    .bid { background: #004b78; } .bidq { background: #00619c; color: #80b8dd; } .best { background: #007ac4; color: #fff; }
    .ask { background: #401010; } .askq { background: #800000; color: #da9494; } .low { background: #d60000; color: #fff; }
    .px { text-align: right; padding-right: 3px; }
    .off { background: #30333c; color: #9a9ea6; }
    .cur { background: #7b8597; color: #15171c; border-right: 2px solid #d3d7de; padding-right: 1px; }
    .topm { border-top: 2px solid #c8ccd2; line-height: 13px; }
    .lm { border-left: 2px solid #c8ccd2; }
    .foot { height: 15px; background: #0d0e10; }
    .hs { display: flex; height: 8px; background: #3c434e; }
    .q { width: 8px; height: 8px; background: #7b8597; }
    .ht { width: 225px; height: 8px; background: #c1c6d0; margin-right: 112px; }
    .vs { width: 8px; height: 838px; background: #3c434e; display: flex; flex-direction: column; }
    .vt { height: 37px; background: #c1c6d0; margin-top: 395px; }
    .vs .end { margin-top: 382px; } .cor { width: 8px; height: 8px; background: #f0f0f0; flex: none; }
    .split { width: 3px; background: #4a4a4c; margin: 0 0 0 2px; border-right: 1px solid #2a2a2c; height: 838px; }
  `];
  render() {
    const cols: [string, number, string, number][] = [["Symbol", 35, "TYM21", 33], ["Position", 37, "0", 6], ["Last", 21, "132'14.0", 40], ["Net Chg", 38, "-0'05.5", 33],
      ["Trd Size", 40, "1", 6], ["TrdExch", 40, "CBOT", 28], ["Bid", 15, "132'14.0", 40], ["Bid Size", 39, "3,869", 27], ["Ask", 20, "132'14.5", 40]];
    const gly = html`<svg width="12" height="12"><path d="M0 0h5v3H0zM0 4h5v4H0zM0 9h5v3H0z" fill="#0b93cf"/><path d="M6 0h6v3H6zM6 4h6v4H6zM6 9h6v3H6z" fill="#66c5b0"/></svg>`;
    const x = html`<svg class="x" width="8" height="8"><path d="M1 1l6 6M7 1L1 7" stroke="#fff" stroke-width="1.800"/></svg>`;
    return html`
      <div class="title">${run(757, [[766, 12, gly], [791, 294, fit("Matrix - TYM21 [CBOT] - 10 Yr U.S. Treasury Notes Jun 2021", 294)],
        [1151, 29, html`<div class="s"><span>S</span><svg width="6" height="4"><path d="M0 0h6L3 4z"/></svg></div>`],
        [1208, 6, html`<i class="min"></i>`], [1242, 10, html`<i class="max"></i>`], [1279, 8, x]])}</div>
      <div class="tb">${run(760, [[770, 16, icon("closepos")], [789, 73, fit("Close Position", 73)], [879, 16, icon("cart")], [898, 86, fit("Cancel All orders", 86)],
        [1001, 16, icon("cart")], [1020, 75, fit("Cancel All bids", 75)], [1112, 16, icon("cart")], [1131, 83, fit("Cancel All offers", 83)],
        [1226, 4, sep], [1288, 10, chevron]])}</div>
      <div class="tbl">
        ${cols.map((c) => html`<div class="th">${fit(c[0], c[1])}</div>`)}
        ${cols.map((c, i) => html`<div class=${classMap({ td: true, neg: i === 2 || i === 3 })}>${fit(c[2], c[3])}</div>`)}
      </div>
      <div class="work">
        <div class="lad">
          <div class="h"><span>${fit("Open P/L (U...", 67)}</span><span>${fit("Orders", 34)}</span><span>${fit("Bid Size", 39)}</span><span>${fit("Price", 24)}</span><span>${fit("Ask Size", 43)}</span></div>
          ${Array.from({ length: 46 }, (_, i) => {
            const v = 26 - i / 2;
            const p = `132'${String(Math.floor(v)).padStart(2, "0")}.${v % 1 ? 5 : 0}`;
            return html`<div class="r"><i class="c"></i><i class="c"></i>
              <span class=${classMap({ c: true, bid: !bids[i], bidq: !!bids[i] && i > 24, best: i === 24 })}>${bids[i] ?? ""}</span>
              <span class=${classMap({ c: true, px: true, off: i < 5 || i > 24, cur: i === 24, topm: i === 5, lm: i === 13 })}>${i === 24 ? "1   " : i === 16 ? "v " : ""}${p}</span>
              <span class=${classMap({ c: true, ask: !asks[i], askq: !!asks[i] && i < 23, low: i === 23 })}>${asks[i] ?? ""}</span></div>`;
          })}
          <div class="foot"></div>
          <div class="hs"><i class="q"></i><i class="ht"></i><i class="q"></i></div>
        </div>
        <div class="vs"><i class="q"></i><i class="vt"></i><i class="q end"></i><i class="cor"></i></div>
        <i class="split"></i>
        <trade-bar></trade-bar>
      </div>`;
  }
}

/* ---------- bottom status bar ---------- */
@customElement("status-bar")
class StatusBar extends LitElement {
  static styles = [slotCss, css`
    :host { display: flex; height: 26px; width: 1305px; background: #141519; color: #77797e; font: 11px "Noto Sans", "Open Sans", sans-serif; }
    .tabs text { font: 11.500px "Noto Sans", "Open Sans", sans-serif; }
    .plus { width: 20px; height: 21px; background: #272c37; color: #ccc; display: flex; align-items: center; justify-content: center; }
    .big { font-size: 15.500px; line-height: 18px; color: #d4d4d4; margin-top: 3px; }
    .two { display: flex; flex-direction: column; align-items: flex-end; line-height: 12px; font-size: 10.500px; margin-top: 2px; width: 100%; }
    .l { align-items: flex-start; }
    .st { margin-top: 3px; }
    .dot { width: 13px; height: 13px; border-radius: 50%; background: #57a639; margin-top: 4px; }
  `];
  render() {
    const big = (t: string, w: number) => html`<div class="big">${fit(t, w)}</div>`;
    const two = (a: string, aw: number, b: string, bw: number, l = false) => html`<div class=${classMap({ two: true, l })}>${fit(a, aw)}${fit(b, bw)}</div>`;
    return html`
      <svg class="tabs" width="412" height="26">
        <g fill="#7d8087"><path d="M6 11h1.500v7H6zM12 11v7l-4-3.500zM27 11v7l-4-3.500zM39 11v7l4-3.500zM54 11v7l4-3.500zM59.500 11H61v7h-1.500z"/></g>
        <path d="M66 3.500H201M66 3L77 25.500H204" fill="none" stroke="#777a80"/>
        <path d="M199 3H338V26H209z" fill="#7f8b9d"/>
        <path d="M338 3.500H411V25.500H343L338 8" fill="none" stroke="#777a80"/>
        <text x="82" y="18.500" textLength="114" fill="#7d8087">10min-TY-Sneak-Attack</text>
        <text x="215" y="18.500" textLength="115" fill="#15171c">10min-US-Sneak-Attack</text>
        <text x="348" y="18.500" textLength="55" fill="#7d8087">Cloud Scan</text>
      </svg>
      ${run(412, [[412, 20, html`<div class="plus">+</div>`], [496, 72, big("210CE035", 72)],
        [620, 47, two("Open", 25, "Positions", 39)], [669, 9, big("0", 9)],
        [700, 33, two("Purch", 26, "Power", 27)], [735, 48, big("$5,026", 48)],
        [860, 23, two("RT", 11, "TE", 10)], [885, 18, big("$0", 18)],
        [970, 37, two("Closed", 29, "P/L", 15)], [1009, 18, big("$0", 18)],
        [1103, 16, big("11", 16)], [1122, 22, two("May", 19, "2021", 20, true)],
        [1151, 39, big("08:26", 39)], [1192, 18, two("23", 10, "AM", 15, true)],
        [1221, 19, html`<span class="st">${fit("Live", 19)}</span>`], [1242, 13, html`<i class="dot"></i>`],
        [1261, 24, html`<span class="st">${fit("Data", 24)}</span>`], [1287, 13, html`<i class="dot"></i>`]])}`;
  }
}

/* ---------- depth ladder on the right ---------- */
const vol: Record<number, number> = { 235: 2, 230: 5375, 225: 7006, 220: 15006, 215: 20334, 210: 18778, 205: 17422, 200: 10554, 195: 26898, 190: 42266, 185: 73723, 180: 94418, 175: 105056, 170: 58502, 165: 64495, 160: 50962, 155: 44091, 150: 18591, 145: 7833, 140: 586 };
const dBid: Record<number, number> = { 140: 3869, 135: 3116, 130: 3837, 125: 2688, 120: 4408, 115: 2796, 110: 4608, 105: 4195, 100: 5364, 95: 3786 };
const dAsk: Record<number, number> = { 190: 3217, 185: 3566, 180: 3705, 175: 3351, 170: 3580, 165: 3450, 160: 3131, 155: 3935, 150: 3242, 145: 2409 };
const dBid1: Record<number, number> = { 140: 582, 135: 40, 130: 39, 125: 14, 120: 34 };
const dAsk1: Record<number, number> = { 165: -102, 160: -118, 155: 373, 150: 57, 145: 2388 };
const sold: Record<number, number> = { 185: 5319, 180: 10677, 175: 10501, 170: 9960, 165: 11023, 160: 1737, 155: 595, 150: 2736, 145: 2405, 140: 586 };
const bought: Record<number, number> = { 200: -8094, 190: 306, 185: 9293, 180: 8845, 175: 8548, 170: 10298, 165: 5735, 160: 1097, 155: 73, 150: 1190, 145: 2060 };

const sheetUp = svg`<path d="M2 1h14v20H2z" fill="#eef0ea" stroke="#c4c8c0"/><path d="M4 6h8M4 10h8M4 14h8M4 18h8" stroke="#c8ccc4"/><path d="M13 6l7 7h-4v8h-6v-8H6z" fill="#66b82c" stroke="#3b8a16"/>`;
const sheetDn = svg`<path d="M2 3h14v19H2z" fill="#eef0ea" stroke="#c4c8c0"/><path d="M4 9h8M4 13h8M4 17h8" stroke="#c8ccc4"/><path d="M13 17L6 9h4V2h6v7h4z" fill="#74c62c" stroke="#3b8a16"/>`;
const domIcons = [sheetUp, sheetDn,
  svg`<path d="M6 7h15v15H6z" fill="#3c3c44" stroke="#000" stroke-dasharray="2 1.500"/><path d="M0 2l3-2 3 3 2-1 5 5-6 7-5-7z" fill="#b81414" stroke="#6e0c0c"/><path d="M6 14l7-8 5 5-7 8z" fill="#f2c21c" stroke="#b0700c"/><path d="M8.500 16.500l7-8" stroke="#c8301c" stroke-width="1.500"/>`,
  sheetUp, sheetDn,
  svg`<path d="M8 2q3-2.500 6 0 1 2-1.500 12h-3Q7 4 8 2z" fill="#e01c1c"/><circle cx="11" cy="20" r="3.200" fill="#d81818"/>`,
  svg`<path d="M2 0h13l6 6v17H2z" fill="#d6f0f4"/><path d="M15 0l6 6h-6z" fill="#8fc8d4"/><path d="M12 12h7M12 15h7M4 19h15" stroke="#1a2a38" stroke-width="1.500"/><path d="M4 9l8 6-3 4-7-6z" fill="#2c74d0"/><path d="M3 12l6 5-2 3-5-5z" fill="#fff"/>`,
  svg`<path d="M2 2v5M7 2v5" stroke="#c8a060" stroke-width="1.500"/><path d="M0 6h9v5q-1 3-4.500 3T0 11zM4.500 14v6q0 2-2 2" fill="#9cc4e0" stroke="#5c88a8"/><path d="M14 1h4v2h3v19h-9V3h2z" fill="#e8b030"/><path d="M12 3h9v8h-9z" fill="#d85020"/><path d="M16.500 5v5M14 7.500h5M14 17h5" stroke="#ffe8a0" stroke-width="1.500"/>`,
  svg`<path d="M2.500 21L12 10" stroke="#174a9c" stroke-width="5" stroke-linecap="round"/><path d="M2.500 21L12 10" stroke="#7ab4f0" stroke-width="2.800" stroke-linecap="round"/><path d="M17 1q-7 0-6.500 6 1 5 5 4.500 5-.5 5-5l-4 2.500-3-1 .5-3.500z" fill="#7ab4f0" stroke="#174a9c"/>`,
  svg`<path d="M18 7q-1-4-7-4-6 .300-6 4t6 4.500q7 1 7 5T11 21q-7 0-8-5" fill="none" stroke="#0a5c80" stroke-width="5"/><path d="M11 0v4M11 20v4" stroke="#1ca8d6" stroke-width="3.500"/><path d="M18 7q-1-4-7-4-6 .300-6 4t6 4.500q7 1 7 5T11 21q-7 0-8-5" fill="none" stroke="#22b6e2" stroke-width="3.400"/>`,
  svg`<ellipse cx="8" cy="7" rx="8" ry="6.500" fill="#4c90e0"/><path d="M2 9l-1 7 6-4z" fill="#4c90e0"/><ellipse cx="8" cy="4.500" rx="5.500" ry="2.500" fill="#a8d0f8"/><ellipse cx="15" cy="13" rx="7.500" ry="6" fill="#48b040"/><ellipse cx="15" cy="10" rx="5" ry="1.800" fill="#98dc90"/><path d="M17 17l3 6 1-8z" fill="#48b040"/><path d="M11 13.500h1.500M14.500 13.500H16M18 13.500h1.500" stroke="#fff" stroke-width="1.800"/>`,
  svg`<path d="M3 1v21" stroke="#3434d0" stroke-width="1.500"/><path d="M1 20h20" stroke="#c01818" stroke-width="1.500"/><path d="M5 18l5-8 4 5 6-9" stroke="#8c3ca0" fill="none" stroke-width="1.300"/><path d="M1 4l2-3 2 3M18 17l3 3-3 3" stroke="#a02040" fill="none"/>`,
  svg`<path d="M1.500 22l8-8" stroke="#3c50b0" stroke-width="3.800" stroke-linecap="round"/><path d="M2 21.500l7-7" stroke="#a8b8f0" stroke-width="1.400"/><circle cx="15" cy="7.500" r="6.800" fill="#bfe0f6" stroke="#e8f2fa" stroke-width="1.800"/><path d="M10.500 6q2-4 6-3.500" stroke="#fff" fill="none" stroke-width="1.500"/>`,
];

@customElement("depth-ladder")
class DepthLadder extends LitElement {
  static styles = [slotCss, css`
    :host { display: flex; flex-direction: column; width: 594px; height: 998px; background: #464958; border-left: 1px solid #8496a8; box-sizing: border-box; overflow: hidden; }
    .tb { display: flex; height: 35px; flex: none; }
    .slot { height: 31px; }
    .chk { width: 31px; height: 32px; background: #a6a9c2; display: flex; align-items: center; justify-content: center; }
    .grid { position: relative; width: 505px; height: 963px; overflow: hidden; }
    .rows { margin-top: -3px; }
    .row { display: grid; grid-template-columns: 7px 55px 57px 46px 46px 46px 46px 46px 46px 55px 55px; height: 18px; background: #073642; font: 15.500px/18px "Roboto", sans-serif; letter-spacing: -0.620px; }
    .row > * { margin: 0 1px 1px 0; height: 17px; background: #002b36; color: #fff; text-align: right; padding-right: 2px; box-sizing: border-box; white-space: nowrap; display: flex; justify-content: flex-end; background-repeat: no-repeat; }
    .row > .e { background: #003a4c; padding: 0; }
    .row > .p { background-color: #839496; color: #143840; padding-right: 3px; letter-spacing: -0.620px; }
    .row > .tr { background-color: #808080; color: #eee; }
    .row > .now { background-color: #586e75; color: #000; }
    .row > .b { background-color: #268bd2; } .row > .a { background-color: #dc322f; }
    .row > .tot { color: #ffff2a; }
    .row > .sd { color: #d09896; } .row > .bt { color: #85c8e4; }
    .row > .g { background-color: #586e75; }
    .row > .e.eg { background: linear-gradient(90deg, #073642, #586e75); }
    .row > .k1 { background: #302e38; font-weight: 700; } .row > .k2 { background: #002c4c; font-weight: 700; }
    .mark { position: absolute; left: 0; right: 0; top: 463px; height: 2px; background: #f2e4e4; }
  `];
  render() {
    const bar = (w: number, c: string, side: string) => `background-image:linear-gradient(${c},${c});background-size:${Math.round(w)}px 17px;background-position:${side} 0`;
    return html`
      <div class="tb">${run(1308, [...[1334, 1367.5, 1402, 1435.5, 1469, 1504, 1538, 1572, 1606, 1640, 1674, 1708, 1743].map((c, i) => [c - 11, 23, html`<svg width="23" height="24" viewBox="0 0 23 24" fill="none">${domIcons[i]}</svg>`] as Item),
        [1870, 31, html`<div class="chk"><svg width="24" height="26"><path d="M1 3h19v4H1zM1 11h19v4H1zM1 19h19v4H1z" fill="#fff" stroke="#c8cad8"/><path d="M8 18l5 5 9-12" stroke="#4f7a34" stroke-width="5" fill="none"/><path d="M8 18l5 5 9-12" stroke="#d6eec0" stroke-width="2.500" fill="none"/></svg></div>`]])}</div>
      <div class="grid">
        <div class="rows">${Array.from({ length: 54 }, (_, i) => {
          const k = 305 - i * 5;
          const v = vol[k], bd = dBid[k], as = dAsk[k], s = sold[k], b = bought[k];
          const vc = v > 100000 ? "#d33682" : v > 90000 ? "#cb4b16" : v > 43000 ? "#6c71c4" : "#2aa198";
          return html`<div class="row"><i class=${classMap({ e: true, eg: k === 140 })}></i>
            <span class=${classMap({ g: k === 140 })} style=${v ? bar(Math.max(1, (v / 105056) * 54), vc, "right") : ""}>${v ?? ""}</span>
            <span class=${classMap({ p: true, tr: k <= 235 && k >= 145, now: k === 140 })}>132'${String(k).padStart(3, "0")}</span>
            <span class="b" style=${k === 140 ? bar(45, "#004080", "right") : ""}>${dBid1[k] ?? ""}</span>
            <span class=${classMap({ b: true, tot: k === 90 })} style=${bd ? bar((bd / 5364) * 45, "#004080", "right") : ""}>${k === 90 ? 38667 : bd ?? ""}</span>
            <span class=${classMap({ k1: k === 140 })}>${k === 140 ? 59 : ""}</span>
            <span class=${classMap({ k2: k === 145 })}>${k === 145 ? 17 : ""}</span>
            <span class=${classMap({ a: true, tot: k === 195 })} style=${as ? bar((as / 3935) * 45, "#834143", "left") : ""}>${k === 195 ? 33586 : as ?? ""}</span>
            <span class="a" style=${k === 145 ? bar(45, "#834143", "left") : ""}>${dAsk1[k] ?? ""}</span>
            <span class=${classMap({ sd: true, g: k === 140 })} style=${s ? bar(Math.max(2, (s / 11023) * 54), "#834143", "right") : ""}>${s ?? ""}</span>
            <span class=${classMap({ bt: true, g: k === 145 })} style=${b > 1000 ? bar((b / 11023) * 54, "#004080", "left") : ""}>${b ?? ""}</span></div>`;
        })}</div>
        <i class="mark"></i>
      </div>`;
  }
}

@customElement("app-root")
class AppRoot extends LitElement {
  static styles = [slotCss, css`
    :host { display: flex; width: 1901px; height: 998px; overflow: hidden; background: #141519; }
    .left { width: 1307px; height: 998px; overflow: hidden; display: flex; flex-direction: column; flex: none; }
    .menu { height: 16px; background: #1e212b; display: flex; color: #f0f0f0; font: 12px "Noto Sans", "Open Sans", sans-serif; overflow: hidden; }
    .menu .slot { height: 8px; align-items: center; }
    .tb { height: 25px; display: flex; background: #16171b; }
    .cmd { box-sizing: border-box; width: 192px; height: 19px; margin-bottom: 2px; border: 2px solid #68696d; background: #0d0e10; display: flex; color: #808285; font: 12px "Noto Sans", "Open Sans", sans-serif; align-items: center; padding-left: 3px; justify-content: space-between; }
    .dd { background: #232326; width: 19px; height: 15px; display: flex; align-items: center; justify-content: center; }
    .mid { display: flex; height: 931px; background: #2e2e2e; width: 1305px; }
  `];
  render() {
    return html`
      <div class="left">
        <div class="menu">${run(0, [[8, 20, fit("FILE", 20)], [43, 22, fit("EDIT", 22)], [81, 27, fit("VIEW", 27)], [123, 50, fit("WINDOW", 50)], [188, 25, fit("HELP", 25)]])}</div>
        <div class="tb">${run(0, [[5, 16, icon("note")], [29, 16, icon("upload")], [53, 16, icon("print3")], [77, 16, icon("send")], [101, 16, icon("gridx")], [123, 4, sep],
          [133, 16, icon("print")], [155, 4, sep], [166, 16, icon("lock")], [187, 8, caret], [202, 16, icon("keyhand")], [226, 16, icon("cube")], [248, 4, sep],
          [254, 192, html`<div class="cmd">${fit("Type a symbol/command", 118)}<span class="dd">${caret}</span></div>`], [449, 16, icon("play")], [474, 16, icon("search")]])}</div>
        <div class="mid"><chart-window></chart-window><matrix-window></matrix-window></div>
        <status-bar></status-bar>
      </div>
      <depth-ladder></depth-ladder>`;
  }
}
